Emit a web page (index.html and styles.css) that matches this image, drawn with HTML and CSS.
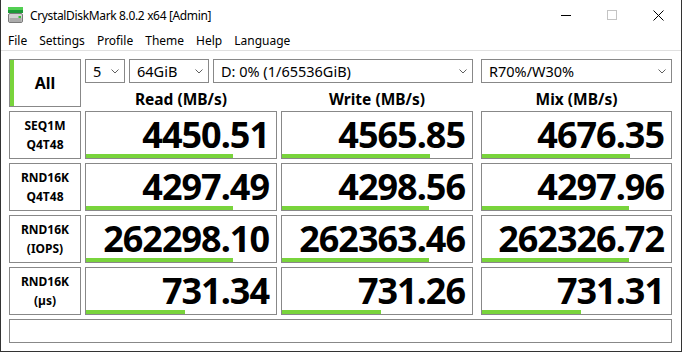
FILE: index.html
```html
<!DOCTYPE html>
<html>
<head>
<meta charset="utf-8">
<link rel="stylesheet" href="styles.css">
</head>
<body>
<div class="window">
  <div class="titlebar">
    <svg class="app-icon" width="16" height="17" viewBox="0 0 16 17">
      <rect x="0" y="0" width="15" height="3" fill="#52cf52"/>
      <rect x="0" y="3" width="15" height="3" fill="#1c9a38"/>
      <rect x="0.5" y="6.5" width="14" height="9" rx="1.5" fill="#d2d2d2" stroke="#7a7a7a"/>
      <rect x="1.5" y="11" width="12" height="4" fill="#ababab"/>
      <rect x="10.5" y="9" width="2.5" height="2" fill="#36c236"/>
    </svg>
    <div class="title">CrystalDiskMark 8.0.2 x64 [Admin]</div>
    <div class="controls">
      <div class="ctl"><svg width="10" height="10" viewBox="0 0 10 10"><line x1="0" y1="5.5" x2="10" y2="5.5" stroke="#000" stroke-width="1"/></svg></div>
      <div class="ctl"><svg width="10" height="10" viewBox="0 0 10 10"><rect x="0.5" y="0.5" width="9" height="9" fill="none" stroke="#c4c4c4" stroke-width="1"/></svg></div>
      <div class="ctl"><svg width="11" height="11" viewBox="0 0 11 11"><path d="M0.5 0.5 L10.5 10.5 M10.5 0.5 L0.5 10.5" stroke="#000" stroke-width="1"/></svg></div>
    </div>
  </div>
  <div class="menubar">
    <span class="menu-item">File</span>
    <span class="menu-item">Settings</span>
    <span class="menu-item">Profile</span>
    <span class="menu-item">Theme</span>
    <span class="menu-item">Help</span>
    <span class="menu-item">Language</span>
  </div>
  <div class="client">
    <div class="top">
      <div class="all-btn"><span>All</span></div>
      <div class="top-right">
        <div class="combos">
          <div class="combo w40"><span>5</span><svg class="chev" width="8" height="5" viewBox="0 0 8 5"><path d="M0.5 0.5 L4 4 L7.5 0.5" fill="none" stroke="#606060"/></svg></div>
          <div class="combo w80"><span>64GiB</span><svg class="chev" width="8" height="5" viewBox="0 0 8 5"><path d="M0.5 0.5 L4 4 L7.5 0.5" fill="none" stroke="#606060"/></svg></div>
          <div class="combo w260"><span>D: 0% (1/65536GiB)</span><svg class="chev" width="8" height="5" viewBox="0 0 8 5"><path d="M0.5 0.5 L4 4 L7.5 0.5" fill="none" stroke="#606060"/></svg></div>
          <div class="combo w191 mix"><span>R70%/W30%</span><svg class="chev" width="8" height="5" viewBox="0 0 8 5"><path d="M0.5 0.5 L4 4 L7.5 0.5" fill="none" stroke="#606060"/></svg></div>
        </div>
        <div class="headers">
          <div class="hdr c192">Read (MB/s)</div>
          <div class="hdr c192">Write (MB/s)</div>
          <div class="hdr c191 mix">Mix (MB/s)</div>
        </div>
      </div>
    </div>
    <div class="row">
      <div class="label"><span>SEQ1M</span><span>Q4T48</span></div>
      <div class="val c192"><span class="num">4450.51</span><div class="bar" style="width:147px"></div></div>
      <div class="val c192"><span class="num">4565.85</span><div class="bar" style="width:148px"></div></div>
      <div class="val c191 mix"><span class="num">4676.35</span><div class="bar" style="width:148px"></div></div>
    </div>
    <div class="row">
      <div class="label"><span>RND16K</span><span>Q4T48</span></div>
      <div class="val c192"><span class="num">4297.49</span><div class="bar" style="width:147px"></div></div>
      <div class="val c192"><span class="num">4298.56</span><div class="bar" style="width:147px"></div></div>
      <div class="val c191 mix"><span class="num">4297.96</span><div class="bar" style="width:147px"></div></div>
    </div>
    <div class="row">
      <div class="label"><span>RND16K</span><span>(IOPS)</span></div>
      <div class="val c192"><span class="num">262298.10</span><div class="bar" style="width:147px"></div></div>
      <div class="val c192"><span class="num">262363.46</span><div class="bar" style="width:147px"></div></div>
      <div class="val c191 mix"><span class="num">262326.72</span><div class="bar" style="width:147px"></div></div>
    </div>
    <div class="row">
      <div class="label"><span>RND16K</span><span>(µs)</span></div>
      <div class="val c192"><span class="num">731.34</span><div class="bar" style="width:99px"></div></div>
      <div class="val c192"><span class="num">731.26</span><div class="bar" style="width:99px"></div></div>
      <div class="val c191 mix"><span class="num">731.31</span><div class="bar" style="width:99px"></div></div>
    </div>
    <div class="status"></div>
  </div>
</div>
</body>
</html>
```
FILE: styles.css
```css
* { box-sizing: border-box; }
html, body { margin: 0; padding: 0; background: #fff; }
body { font-family: "Noto Sans", "Open Sans", sans-serif; color: #000; }

.window {
  width: 682px;
  height: 352px;
  border-left: 1px solid #333;
  border-right: 1px solid #333;
  border-bottom: 1px solid #333;
  background: #fff;
  display: flex;
  flex-direction: column;
}

.titlebar {
  height: 30px;
  display: flex;
  align-items: center;
}
.app-icon { margin-left: 7px; margin-top: 1px; flex: none; }
.title { margin-left: 6px; font-size: 12px; letter-spacing: -0.35px; white-space: nowrap; }
.controls { margin-left: auto; display: flex; height: 30px; }
.ctl { width: 46px; height: 30px; display: flex; align-items: center; justify-content: center; }
.ctl svg { display: block; }

.menubar {
  height: 21px;
  display: flex;
  align-items: center;
  padding-left: 1px;
  border-bottom: 1px solid #e0e0e0;
  font-size: 12px;
}
.menu-item { padding: 0 6px; white-space: nowrap; }

.client {
  padding: 8px 0 0 8px;
  display: flex;
  flex-direction: column;
  gap: 4px;
}

.top { display: flex; gap: 4px; height: 48px; }
.all-btn {
  width: 72px;
  height: 48px;
  border: 1px solid #888;
  border-left-width: 5px;
  border-left-color: #888;
  position: relative;
  display: flex;
  align-items: center;
  justify-content: center;
  font-weight: bold;
  font-size: 16px;
  padding-right: 4px;
}
.all-btn::before {
  content: "";
  position: absolute;
  left: -4px;
  top: 0;
  bottom: 0;
  width: 4px;
  background: #79d43c;
}
.top-right { display: flex; flex-direction: column; }
.combos { display: flex; gap: 4px; height: 24px; }
.combo {
  height: 24px;
  border: 1px solid #888;
  display: flex;
  align-items: center;
  justify-content: space-between;
  padding: 0 5px 0 7px;
  font-size: 14.5px;
  white-space: nowrap;
}
.combo span { line-height: 20px; }
.chev { display: block; margin-top: 1px; }
.w40 { width: 40px; }
.w80 { width: 80px; }
.w260 { width: 260px; }
.w191 { width: 191px; }
.mix { margin-left: 4px; }

.headers { display: flex; gap: 4px; height: 24px; }
.hdr {
  text-align: center;
  font-weight: bold;
  font-size: 15.5px;
  line-height: 20px;
  padding-top: 6px;
  white-space: nowrap;
}
.c192 { width: 192px; }
.c191 { width: 191px; }

.row { display: flex; gap: 4px; height: 48px; }
.label {
  width: 72px;
  height: 48px;
  border: 1px solid #888;
  display: flex;
  flex-direction: column;
  align-items: center;
  justify-content: center;
  font-weight: bold;
  font-size: 12px;
  line-height: 19px;
}
.val {
  height: 48px;
  border: 1px solid #888;
  position: relative;
  text-align: right;
  padding-right: 7px;
}
.num {
  display: block;
  font-weight: bold;
  font-size: 36px;
  line-height: 40px;
  padding-top: 3px;
  letter-spacing: -1px;
  white-space: nowrap;
}
.bar {
  position: absolute;
  left: 0;
  bottom: 0;
  height: 4px;
  background: #79d43c;
}

.status {
  width: 663px;
  height: 24px;
  border: 1px solid #888;
}
```
